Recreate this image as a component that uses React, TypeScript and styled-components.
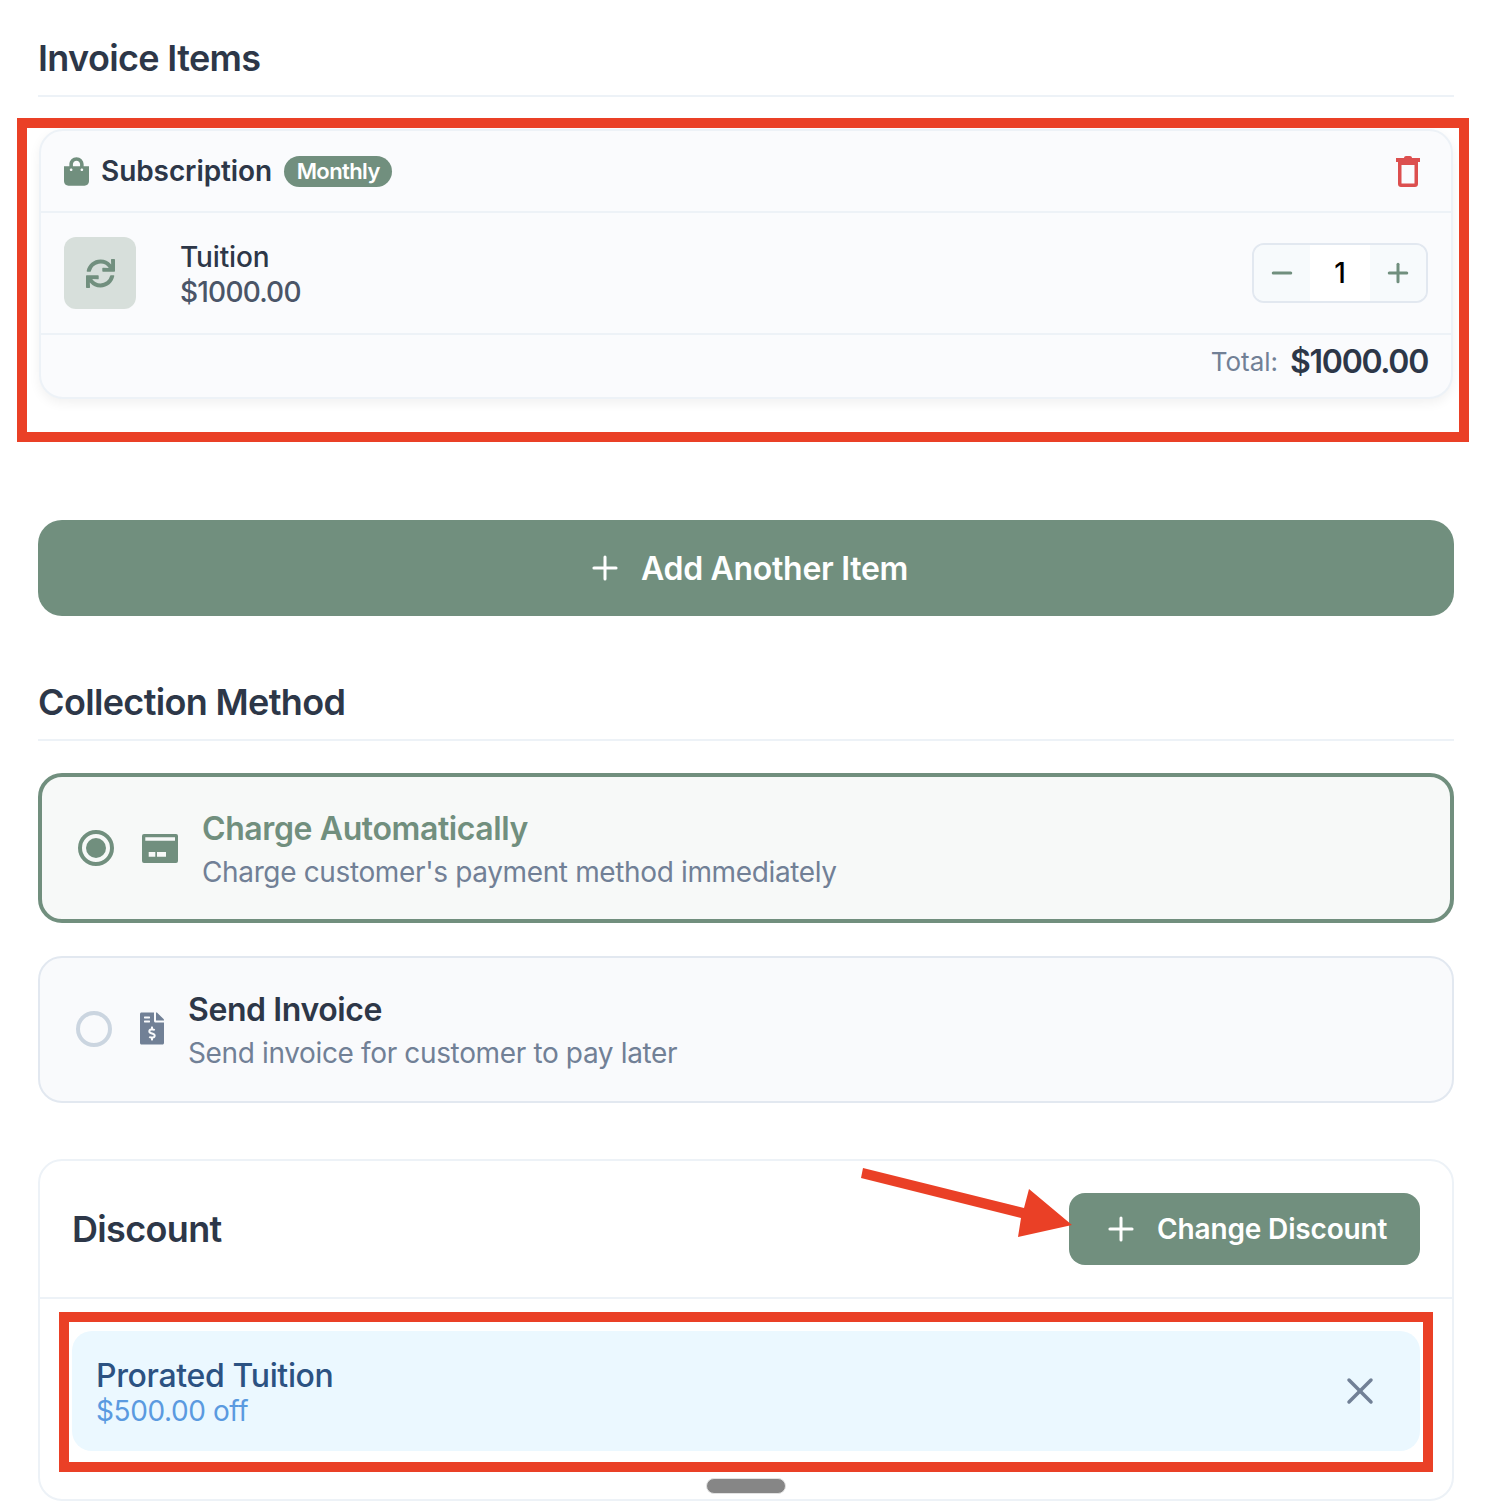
import React from "react";
import styled, { createGlobalStyle } from "styled-components";
import { FaShoppingBag, FaSync, FaFileInvoiceDollar } from "react-icons/fa";
import { Plus, Minus, X } from "lucide-react";

const Global = createGlobalStyle`
  html, body { margin: 0; padding: 0; background: #fff; }
  body { font-family: Inter, "Liberation Sans", sans-serif; width: 1498px; height: 1504px; overflow: hidden; }
  * { box-sizing: border-box; }
`;
const Page = styled.div`
  position: relative;
  width: 1498px;
  height: 1504px;
  padding: 36px 44px 0 38px;
  overflow: hidden;
`;
const SectionTitle = styled.h2`
  margin: 0;
  height: 61px;
  border-bottom: 2px solid #edf2f7;
  font-size: 36px;
  line-height: 44px;
  font-weight: 600;
  letter-spacing: -0.65px;
  color: #2d3748;
`;
const ItemCard = styled.section`
  margin: 32px 1px 0;
  height: 270px;
  border: 2px solid #edf2f7;
  border-radius: 24px;
  background: #fafbfd;
  box-shadow: 0 4px 12px rgba(0, 0, 0, 0.06);
`;
const ItemHeader = styled.div`
  height: 82px;
  padding: 0 31px 0 23px;
  display: flex;
  align-items: center;
  border-bottom: 2px solid #edf2f7;
  color: #718f7e;
`;
const BagIcon = styled(FaShoppingBag)`
  width: 25px;
  height: 29px;
`;
const ItemName = styled.span`
  margin-left: 12px;
  font-size: 28px;
  font-weight: 600;
  letter-spacing: -0.08px;
  color: #2d3748;
`;
const Badge = styled.span`
  margin-left: 12px;
  height: 31px;
  padding: 0 12.5px;
  border-radius: 16px;
  background: #718f7e;
  color: #fff;
  font-size: 22px;
  font-weight: 600;
  letter-spacing: -0.6px;
  line-height: 31px;
`;
const TrashButton = styled.span`
  margin-left: auto;
  display: flex;
`;
const ItemBody = styled.div`
  height: 122px;
  padding: 0 23px;
  display: flex;
  align-items: center;
  border-bottom: 2px solid #edf2f7;
`;
const IconTile = styled.div`
  width: 72px;
  height: 72px;
  border-radius: 12px;
  background: #d7dfdb;
  color: #718f7e;
  display: flex;
  align-items: center;
  justify-content: center;
`;
const ItemInfo = styled.div`
  margin-left: 44px;
  padding-top: 4px;
  display: flex;
  flex-direction: column;
`;
const ItemLabel = styled.span`
  font-size: 28px;
  line-height: 35px;
  font-weight: 500;
  letter-spacing: -0.15px;
  color: #2d3748;
`;
const ItemPrice = styled.span`
  font-size: 28px;
  line-height: 35px;
  font-weight: 500;
  letter-spacing: -0.8px;
  color: #4a5568;
`;
const Stepper = styled.div`
  margin-left: auto;
  width: 176px;
  height: 60px;
  border: 2px solid #e2e8f0;
  border-radius: 12px;
  display: flex;
  overflow: hidden;
`;
const StepButton = styled.div`
  flex: 1;
  color: #718f7e;
  background: #f7fafc;
  display: flex;
  align-items: center;
  justify-content: center;
`;
const StepValue = styled.div`
  width: 60px;
  background: #fff;
  color: #000;
  font-size: 28px;
  font-weight: 500;
  display: flex;
  align-items: center;
  justify-content: center;
`;
const ItemFooter = styled.div`
  height: 60px;
  padding: 0 23px 8px;
  display: flex;
  align-items: center;
  justify-content: flex-end;
  gap: 12px;
`;
const TotalLabel = styled.span`
  font-size: 26px;
  color: #718096;
`;
const TotalValue = styled.span`
  font-size: 32px;
  font-weight: 600;
  letter-spacing: -1.3px;
  color: #2d3748;
`;
const AddButton = styled.div`
  margin-top: 121px;
  height: 96px;
  padding-left: 2px;
  border-radius: 24px;
  background: #718f7e;
  color: #fff;
  display: flex;
  align-items: center;
  justify-content: center;
  gap: 17px;
  font-size: 32px;
  font-weight: 600;
  letter-spacing: -0.3px;
`;
const MethodTitle = styled(SectionTitle)`
  margin-top: 64px;
`;
const Option = styled.div<{ $active?: boolean }>`
  margin-top: ${(p) => (p.$active ? "32px" : "33px")};
  height: ${(p) => (p.$active ? "150px" : "147px")};
  padding: 0 36px;
  border-radius: 24px;
  border: ${(p) => (p.$active ? "4px solid #718f7e" : "2px solid #e2e8f0")};
  background: ${(p) => (p.$active ? "#f7f9f8" : "#f9fafc")};
  display: flex;
  align-items: center;
`;
const Radio = styled.span<{ $active?: boolean }>`
  flex: none;
  width: 36px;
  height: 36px;
  margin-top: ${(p) => (p.$active ? "0" : "-2px")};
  border-radius: 50%;
  border: 4px solid ${(p) => (p.$active ? "#718f7e" : "#cbd5e0")};
  display: flex;
  align-items: center;
  justify-content: center;
  &::after {
    content: "";
    width: 20px;
    height: 20px;
    border-radius: 50%;
    background: ${(p) => (p.$active ? "#718f7e" : "transparent")};
  }
`;
const OptionIcon = styled.span<{ $color: string; $active?: boolean }>`
  margin: ${(p) => (p.$active ? "0" : "-2px")} 24px 0 28px;
  display: flex;
  color: ${(p) => p.$color};
`;
const InvoiceIcon = styled(FaFileInvoiceDollar)`
  width: 24px;
  height: 33px;
`;
const OptionText = styled.div`
  padding-top: 2px;
  display: flex;
  flex-direction: column;
  gap: 5px;
`;
const OptionTitle = styled.span<{ $active?: boolean }>`
  font-size: 32px;
  line-height: 40px;
  font-weight: 600;
  letter-spacing: -0.4px;
  color: ${(p) => (p.$active ? "#718f7e" : "#2d3748")};
`;
const OptionDesc = styled.span`
  font-size: 28px;
  line-height: 36px;
  letter-spacing: -0.36px;
  color: #718096;
`;
const DiscountCard = styled.section`
  margin-top: 56px;
  height: 342px;
  border: 2px solid #edf2f7;
  border-radius: 24px;
  background: #fff;
`;
const DiscountHeader = styled.div`
  height: 138px;
  padding: 0 32px;
  border-bottom: 2px solid #edf2f7;
  display: flex;
  align-items: center;
  justify-content: space-between;
`;
const DiscountTitle = styled.h3`
  margin: 0;
  font-size: 36px;
  font-weight: 600;
  letter-spacing: -0.65px;
  color: #2d3748;
`;
const ChangeButton = styled.div`
  width: 351px;
  height: 72px;
  padding-left: 33px;
  border-radius: 16px;
  background: #718f7e;
  color: #fff;
  display: flex;
  align-items: center;
  gap: 17px;
  font-size: 28px;
  font-weight: 600;
  letter-spacing: -0.15px;
`;
const DiscountItem = styled.div`
  margin: 32px 32px 0 32px;
  height: 120px;
  padding: 0 38px 0 24px;
  border-radius: 20px;
  background: #ebf8ff;
  display: flex;
  align-items: center;
  justify-content: space-between;
`;
const DiscountInfo = styled.div`
  padding-top: 3px;
  display: flex;
  flex-direction: column;
`;
const DiscountName = styled.span`
  font-size: 32px;
  line-height: 37px;
  font-weight: 500;
  letter-spacing: -0.35px;
  color: #2c5282;
`;
const DiscountValue = styled.span`
  font-size: 28px;
  line-height: 34px;
  letter-spacing: -0.4px;
  color: #5a9ae0;
`;
const RemoveIcon = styled.span`
  display: flex;
  color: #718096;
`;
const Handle = styled.div`
  position: absolute;
  left: 706px;
  top: 1478px;
  width: 80px;
  height: 16px;
  border-radius: 8px;
  background: #868686;
  border: 1px solid #e2e2e2;
`;
const Highlight = styled.div<{ $l: number; $t: number; $w: number; $h: number; $b: number }>`
  position: absolute;
  left: ${(p) => p.$l}px;
  top: ${(p) => p.$t}px;
  width: ${(p) => p.$w}px;
  height: ${(p) => p.$h}px;
  border: ${(p) => p.$b}px solid #ea4026;
  pointer-events: none;
`;
const Arrow = styled.svg`
  position: absolute;
  left: 850px;
  top: 1150px;
`;

const Trash = () => (
  <svg width="24" height="31" viewBox="0 0 24 31">
    <path d="M8 2 C8 .8 9 0 10 0 H14 C15 0 16 .8 16 2 H24 V6 H0 V2 Z" fill="#dc4f4f" />
    <path
      fillRule="evenodd"
      fill="#dc4f4f"
      d="M2 6 H22 V28 C22 29.8 20.8 31 19 31 H5 C3.2 31 2 29.8 2 28 Z M5.5 9 V27.5 H18.5 V9 Z"
    />
  </svg>
);
const Card = () => (
  <svg width="36" height="29" viewBox="0 0 36 29">
    <path
      fillRule="evenodd"
      fill="#718f7e"
      d="M2 0 H34 A2 2 0 0 1 36 2 V27 A2 2 0 0 1 34 29 H2 A2 2 0 0 1 0 27 V2 A2 2 0 0 1 2 0 Z M3.3 3.3 V6.7 H33 V3.3 Z M6.7 18 V22.7 H13.3 V18 Z M15 18 V22.7 H24 V18 Z"
    />
  </svg>
);

export default function App() {
  return (
    <Page>
      <Global />
      <SectionTitle>Invoice Items</SectionTitle>
      <ItemCard>
        <ItemHeader>
          <BagIcon />
          <ItemName>Subscription</ItemName>
          <Badge>Monthly</Badge>
          <TrashButton>
            <Trash />
          </TrashButton>
        </ItemHeader>
        <ItemBody>
          <IconTile>
            <FaSync size={29} />
          </IconTile>
          <ItemInfo>
            <ItemLabel>Tuition</ItemLabel>
            <ItemPrice>$1000.00</ItemPrice>
          </ItemInfo>
          <Stepper>
            <StepButton>
              <Minus size={30} strokeWidth={2.4} />
            </StepButton>
            <StepValue>1</StepValue>
            <StepButton>
              <Plus size={30} strokeWidth={2.4} />
            </StepButton>
          </Stepper>
        </ItemBody>
        <ItemFooter>
          <TotalLabel>Total:</TotalLabel>
          <TotalValue>$1000.00</TotalValue>
        </ItemFooter>
      </ItemCard>
      <AddButton>
        <Plus size={38} strokeWidth={1.9} />
        Add Another Item
      </AddButton>
      <MethodTitle>Collection Method</MethodTitle>
      <Option $active>
        <Radio $active />
        <OptionIcon $color="#718f7e" $active>
          <Card />
        </OptionIcon>
        <OptionText>
          <OptionTitle $active>Charge Automatically</OptionTitle>
          <OptionDesc>Charge customer's payment method immediately</OptionDesc>
        </OptionText>
      </Option>
      <Option>
        <Radio />
        <OptionIcon $color="#718096">
          <InvoiceIcon />
        </OptionIcon>
        <OptionText>
          <OptionTitle>Send Invoice</OptionTitle>
          <OptionDesc>Send invoice for customer to pay later</OptionDesc>
        </OptionText>
      </Option>
      <DiscountCard>
        <DiscountHeader>
          <DiscountTitle>Discount</DiscountTitle>
          <ChangeButton>
            <Plus size={38} strokeWidth={1.9} />
            Change Discount
          </ChangeButton>
        </DiscountHeader>
        <DiscountItem>
          <DiscountInfo>
            <DiscountName>Prorated Tuition</DiscountName>
            <DiscountValue>$500.00 off</DiscountValue>
          </DiscountInfo>
          <RemoveIcon>
            <X size={44} strokeWidth={1.9} />
          </RemoveIcon>
        </DiscountItem>
      </DiscountCard>
      <Handle />
      <Highlight $l={17} $t={118} $w={1452} $h={324} $b={10} />
      <Highlight $l={59} $t={1312} $w={1374} $h={160} $b={10} />
      <Arrow width="240" height="110" viewBox="0 0 240 110">
        <path
          fill="#ea4026"
          d="M13 18 L11 28 L171 68 L168 87 L222 75 L179 39 L174 58 Z"
        />
      </Arrow>
    </Page>
  );
}
